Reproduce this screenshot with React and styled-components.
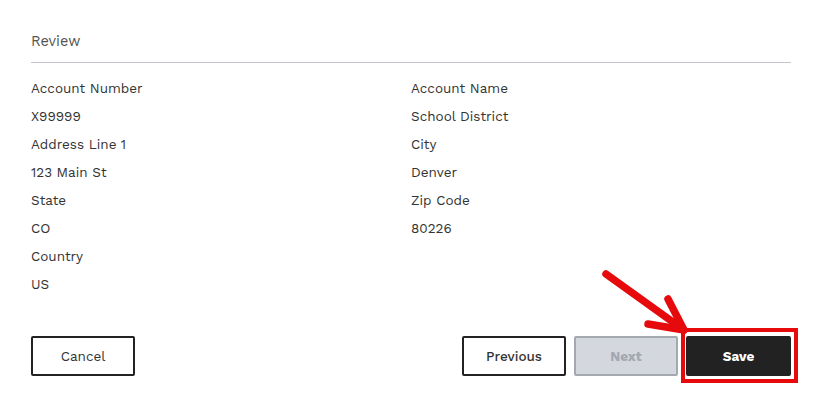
import React from "react";
import styled, { createGlobalStyle } from "styled-components";

const Global = createGlobalStyle`
  html, body { margin: 0; padding: 0; background: #fff; }
  body { font-family: "Work Sans", Inter, "Open Sans", sans-serif; }
`;

const Page = styled.div`
  width: 814px;
  height: 403px;
  box-sizing: border-box;
  padding: 32px 23px 0 31px;
  color: #333;
`;

const Title = styled.h2`
  margin: 0;
  font-size: 14.5px;
  font-weight: 400;
  line-height: 20px;
  color: #555;
`;

const Divider = styled.hr`
  margin: 10px 0 11px;
  border: none;
  border-top: 1px solid #c4c2ca;
`;

const Grid = styled.dl`
  margin: 0;
  display: grid;
  grid-template-columns: 380px 1fr;
`;

const Field = styled.div`
  display: flex;
  flex-direction: column;
`;

const Label = styled.dt`
  font-size: 13.5px;
  line-height: 28px;
  color: #333;
`;

const Value = styled.dd`
  margin: 0;
  font-size: 13.5px;
  line-height: 28px;
  color: #333;
`;

const Footer = styled.div`
  display: flex;
  align-items: center;
  justify-content: space-between;
  margin-top: 38px;
`;

const Group = styled.div`
  display: flex;
  gap: 8px;
`;

const Button = styled.button`
  position: relative;
  width: ${(p) => p.$w || 104}px;
  height: 40px;
  box-sizing: border-box;
  border-radius: 2px;
  font-family: inherit;
  font-size: 13.5px;
  cursor: pointer;
  border: 2px solid ${(p) => (p.$variant === "disabled" ? "#a3a8b1" : "#222")};
  background: ${(p) =>
    p.$variant === "primary" ? "#222" : p.$variant === "disabled" ? "#d4d7dd" : "#fff"};
  color: ${(p) =>
    p.$variant === "primary" ? "#fff" : p.$variant === "disabled" ? "#a2a7b1" : "#333"};
  font-weight: ${(p) => p.$weight || 400};
`;

const Highlight = styled.span`
  position: absolute;
  left: -7px;
  right: -9px;
  top: -10px;
  bottom: -9px;
  border: 4px solid #e60a0c;
  pointer-events: none;
`;

const Arrow = styled.svg`
  position: absolute;
  left: -92px;
  top: -74px;
  width: 100px;
  height: 80px;
  overflow: visible;
  pointer-events: none;
`;

const fields = [
  ["Account Number", "X99999"],
  ["Account Name", "School District"],
  ["Address Line 1", "123 Main St"],
  ["City", "Denver"],
  ["State", "CO"],
  ["Zip Code", "80226"],
  ["Country", "US"],
];

export default function App() {
  return (
    <>
      <Global />
      <Page>
        <Title>Review</Title>
        <Divider />
        <Grid>
          {fields.map(([l, v]) => (
            <Field key={l}>
              <Label>{l}</Label>
              <Value>{v}</Value>
            </Field>
          ))}
        </Grid>
        <Footer>
          <Button $w={104}>Cancel</Button>
          <Group>
            <Button $w={104} $weight={500}>Previous</Button>
            <Button $w={104} $variant="disabled" $weight={700}>Next</Button>
            <Button $w={105} $variant="primary" $weight={700}>
              Save
              <Highlight />
              <Arrow viewBox="0 0 100 80">
                <g stroke="#e60a0c" strokeWidth="7.5" strokeLinecap="round" strokeLinejoin="round" fill="none">
                  <line x1="10" y1="10" x2="88" y2="66" />
                  <polyline points="52,60 88,66 72,35" />
                </g>
              </Arrow>
            </Button>
          </Group>
        </Footer>
      </Page>
    </>
  );
}
